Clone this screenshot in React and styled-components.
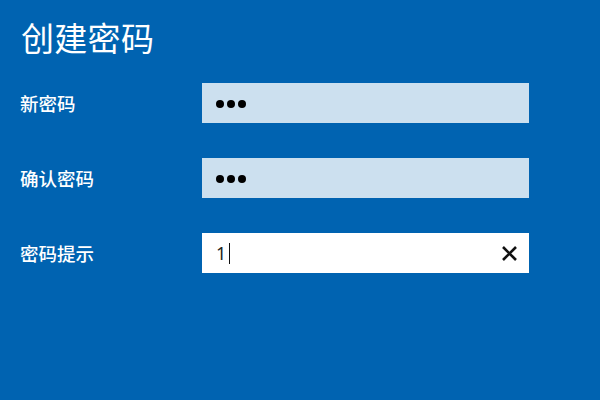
import React from "react";
import styled, { createGlobalStyle } from "styled-components";

const Global = createGlobalStyle`
  html, body { margin: 0; padding: 0; background: #0063b1; }
  body { font-family: "Noto Sans CJK SC", "Noto Sans", sans-serif; }
`;

const Page = styled.div`
  width: 600px;
  height: 400px;
  background: #0063b1;
  color: #ffffff;
  padding: 21px 0 0 20px;
  box-sizing: border-box;
  display: flex;
  flex-direction: column;
`;

const Title = styled.h1`
  margin: 0 0 29px 0;
  padding-left: 1px;
  font-size: 33px;
  line-height: 33px;
  font-weight: 400;
  letter-spacing: 0.3px;
`;

const Form = styled.div`
  display: flex;
  flex-direction: column;
  gap: 35px;
`;

const Row = styled.div`
  display: grid;
  grid-template-columns: 182px 327px;
  align-items: center;
`;

const Label = styled.div`
  font-size: 18.5px;
  line-height: 1;
  font-weight: 500;
`;

const Field = styled.div`
  height: 40px;
  background: ${(p) => (p.$focused ? "#ffffff" : "#cce0ef")};
  display: flex;
  align-items: center;
  padding: 0 11px 0 14px;
  box-sizing: border-box;
  color: #000;
`;

const Dots = styled.div`
  display: flex;
  gap: 3px;
  margin-top: 1px;
`;

const Dot = styled.span`
  width: 8px;
  height: 8px;
  border-radius: 50%;
  background: #000;
`;

const Value = styled.span`
  font-family: "Noto Sans", "Liberation Sans", sans-serif;
  font-size: 18px;
  color: #222;
  line-height: 1;
`;

const Caret = styled.span`
  display: inline-block;
  width: 1px;
  height: 21px;
  background: #111;
  margin-left: 3px;
`;

const Spacer = styled.div`
  flex: 1;
`;

const ClearButton = styled.span`
  display: flex;
  width: 18px;
  height: 18px;
  align-items: center;
  justify-content: center;
`;

function Password({ count }) {
  return (
    <Dots>
      {Array.from({ length: count }).map((_, i) => (
        <Dot key={i} />
      ))}
    </Dots>
  );
}

export default function App() {
  return (
    <>
      <Global />
      <Page>
        <Title>创建密码</Title>
        <Form>
          <Row>
            <Label>新密码</Label>
            <Field>
              <Password count={3} />
            </Field>
          </Row>
          <Row>
            <Label>确认密码</Label>
            <Field>
              <Password count={3} />
            </Field>
          </Row>
          <Row>
            <Label>密码提示</Label>
            <Field $focused>
              <Value>1</Value>
              <Caret />
              <Spacer />
              <ClearButton>
                <svg width="17" height="17" viewBox="0 0 17 17">
                  <path d="M2 2 L15 15 M15 2 L2 15" stroke="#111" strokeWidth="2.6" strokeLinecap="butt" />
                </svg>
              </ClearButton>
            </Field>
          </Row>
        </Form>
      </Page>
    </>
  );
}
